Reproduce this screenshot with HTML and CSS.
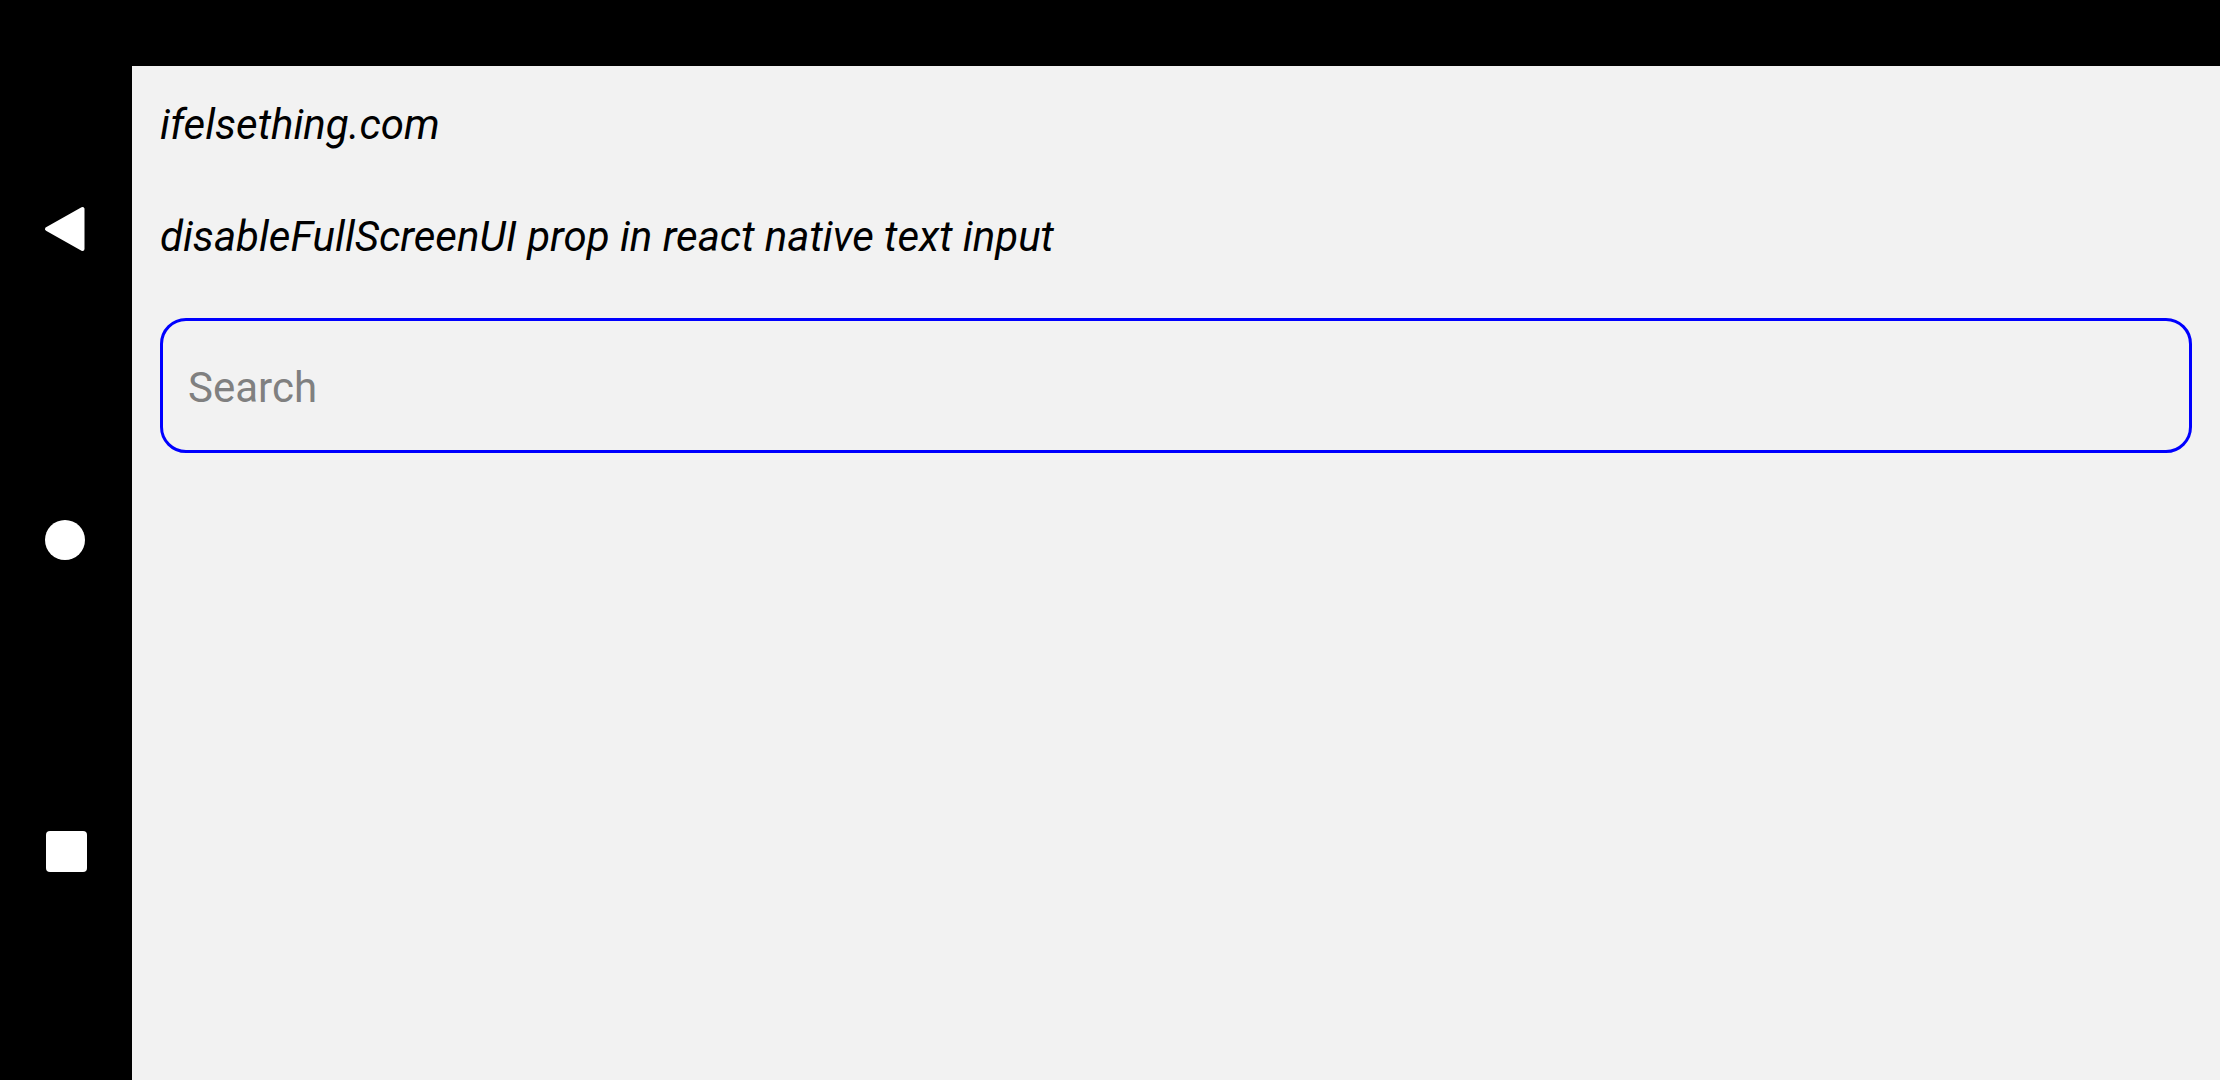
FILE: index.html
```html
<!DOCTYPE html>
<html lang="en">
<head>
<meta charset="utf-8">
<title>ifelsething.com</title>
<link rel="stylesheet" href="styles.css">
</head>
<body>
<div class="screen">
  <nav class="navbar">
    <div class="nav-slot">
      <svg class="nav-back" width="42" height="46" viewBox="0 0 42 46" aria-label="Back">
        <path d="M4 23 L39.5 3 L39.5 43 Z" fill="#fff" stroke="#fff" stroke-width="4" stroke-linejoin="round"/>
      </svg>
    </div>
    <div class="nav-slot">
      <div class="nav-home"></div>
    </div>
    <div class="nav-slot">
      <div class="nav-recent"></div>
    </div>
  </nav>
  <div class="main">
    <div class="statusbar"></div>
    <div class="content">
      <p class="title">ifelsething.com</p>
      <p class="subtitle">disableFullScreenUI prop in react native text input</p>
      <div class="search-box"><span class="placeholder">Search</span></div>
    </div>
  </div>
</div>
</body>
</html>
```

FILE: styles.css
```css
html, body {
  margin: 0;
  padding: 0;
  width: 2220px;
  height: 1080px;
  overflow: hidden;
  background: #000;
}

.screen {
  display: flex;
  flex-direction: row;
  width: 2220px;
  height: 1080px;
}

.navbar {
  width: 132px;
  flex: 0 0 132px;
  height: 1080px;
  background: #000;
  display: flex;
  flex-direction: column;
  justify-content: center;
  align-items: center;
}

.nav-slot {
  width: 132px;
  height: 311px;
  display: flex;
  align-items: center;
  justify-content: center;
}

.nav-back {
  display: block;
  margin-left: -4px;
}

.nav-home {
  width: 40px;
  height: 40px;
  border-radius: 50%;
  background: #fff;
  margin-left: -2px;
}

.nav-recent {
  width: 41px;
  height: 41px;
  border-radius: 4px;
  background: #fff;
  margin-left: 1px;
}

.main {
  flex: 1;
  display: flex;
  flex-direction: column;
  height: 1080px;
}

.statusbar {
  height: 66px;
  flex: 0 0 66px;
  background: #000;
}

.content {
  flex: 1;
  background: #f2f2f2;
  padding: 34px 28px 0 28px;
  display: flex;
  flex-direction: column;
  font-family: Roboto, "Noto Sans", sans-serif;
}

.title,
.subtitle {
  margin: 0;
  font-style: italic;
  font-size: 42px;
  line-height: 49px;
  color: #000;
}

.subtitle {
  margin-top: 63px;
}

.search-box {
  margin-top: 57px;
  height: 129px;
  border: 3px solid #0000ff;
  border-radius: 26px;
  padding: 0 25px;
  display: flex;
  align-items: flex-start;
}

.placeholder {
  margin-top: 42px;
  font-size: 42px;
  line-height: 49px;
  color: #808080;
}
```
